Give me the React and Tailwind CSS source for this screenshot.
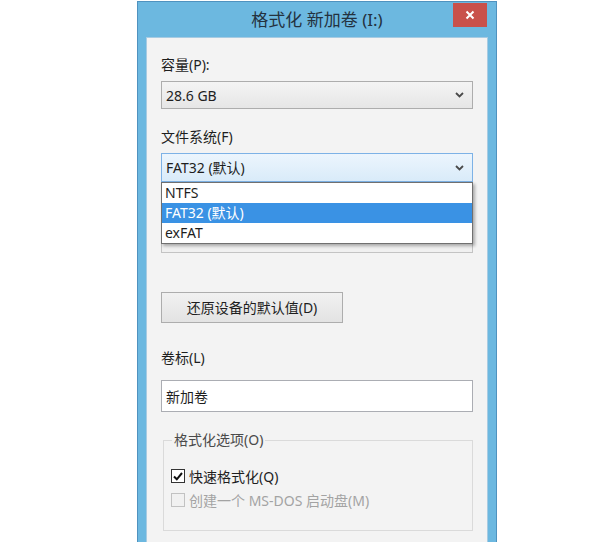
import React from 'react';

const Chevron = () => (
  <svg width="9" height="6" viewBox="0 0 9 6" className="mr-[8px] shrink-0" aria-hidden="true">
    <path d="M1 1l3.5 3.5L8 1" fill="none" stroke="#4a4a4a" strokeWidth="1.8" />
  </svg>
);

const Label = ({ children, className = '' }) => (
  <div className={`h-[20px] leading-[20px] text-[14px] text-[#1e1e1e] ${className}`}>{children}</div>
);

const Select = ({ value, focused, className = '' }) => (
  <div
    className={`flex items-center justify-between border pl-[4px] text-[14px] text-[#1e1e1e] ${
      focused
        ? 'bg-gradient-to-b from-[#ecf5fd] to-[#d9ebf9] border-[#7db2e6]'
        : 'bg-gradient-to-b from-[#f4f4f4] to-[#e6e6e6] border-[#adadad]'
    } ${className}`}
  >
    <span>{value}</span>
    <Chevron />
  </div>
);

const options = ['NTFS', 'FAT32 (默认)', 'exFAT'];

export default function App() {
  return (
    <div className="w-[605px] h-[542px] overflow-hidden bg-white font-['Noto_Sans','Noto_Sans_CJK_SC',sans-serif]">
      <div className="relative ml-[137px] mt-px w-[360px] h-[570px] flex flex-col bg-[#6cb8e0] border border-[#4f92bf] px-[8px]">
        {/* Title bar */}
        <div className="h-[35px] flex items-center justify-center text-[17px] text-[#24323f]">
          格式化 新加卷 (I:)
        </div>
        <button className="absolute top-[1px] right-[9px] w-[34px] h-[24px] bg-[#c9514b] flex items-center justify-center">
          <svg width="10" height="10" viewBox="0 0 10 10" aria-hidden="true">
            <path d="M1.5 1.5l7 7M8.5 1.5l-7 7" stroke="#fff" strokeWidth="2" />
          </svg>
        </button>

        {/* Content */}
        <div className="flex-1 bg-[#f3f3f3] border border-[#a7cbe2] px-[14px] pt-[17px]">
          <Label>容量(P):</Label>
          <Select value="28.6 GB" className="mt-[6px] h-[28px]" />

          <Label className="mt-[18px]">文件系统(F)</Label>
          <div className="relative mt-[6px]">
            <Select value="FAT32 (默认)" focused className="h-[29px]" />
            <div className="absolute left-0 right-0 top-full z-10 bg-white border border-[#707070] shadow-[2px_2px_3px_rgba(0,0,0,0.3)]">
              {options.map((opt, i) => (
                <div
                  key={opt}
                  className={`h-[20px] leading-[20px] pl-[3px] text-[14px] ${
                    i === 1 ? 'bg-[#3a92e4] text-white' : 'text-[#1e1e1e]'
                  }`}
                >
                  {opt}
                </div>
              ))}
            </div>
          </div>

          {/* allocation size row, covered by the open list */}
          <div className="mt-[18px] h-[20px]" />
          <div className="mt-[5px] h-[28px] border border-[#c3c3c3] bg-[#f0f0f0]" />

          <button className="mt-[39px] w-[182px] h-[31px] border border-[#adadad] bg-gradient-to-b from-[#f1f1f1] to-[#e3e3e3] text-[14px] text-[#1e1e1e]">
            还原设备的默认值(D)
          </button>

          <Label className="mt-[25px]">卷标(L)</Label>
          <div className="mt-[12px] h-[32px] border border-[#abadb3] bg-white pl-[4px] flex items-center text-[14px] text-[#1e1e1e]">
            新加卷
          </div>

          {/* Group box */}
          <div className="relative mt-[28px] ml-[2px] h-[91px] border border-[#dadada] pl-[7px] pt-[25px]">
            <span className="absolute -top-[11px] left-[8px] px-[2px] bg-[#f3f3f3] text-[14px] leading-[20px] text-[#4a4a4a]">
              格式化选项(O)
            </span>
            <div className="h-[20px] flex items-center gap-[4px] text-[14px] text-[#1e1e1e]">
              <span className="w-[14px] h-[14px] border border-[#333] bg-white flex items-center justify-center">
                <svg width="12" height="12" viewBox="0 0 12 12" aria-hidden="true">
                  <path d="M2 6.5l2.8 2.8L10 3" fill="none" stroke="#111" strokeWidth="2" />
                </svg>
              </span>
              快速格式化(Q)
            </div>
            <div className="mt-[4px] h-[20px] flex items-center gap-[4px] text-[14px] text-[#a3a3a3]">
              <span className="w-[14px] h-[14px] border border-[#c2c2c2] bg-[#f1f1f1]" />
              创建一个 MS-DOS 启动盘(M)
            </div>
          </div>
        </div>
      </div>
    </div>
  );
}
